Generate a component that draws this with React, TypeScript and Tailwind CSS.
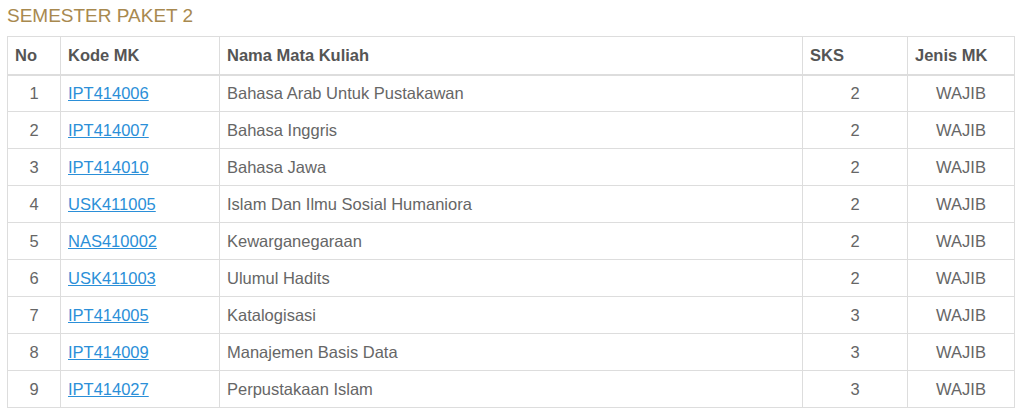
const rows = [
  ['1', 'IPT414006', 'Bahasa Arab Untuk Pustakawan', '2', 'WAJIB'],
  ['2', 'IPT414007', 'Bahasa Inggris', '2', 'WAJIB'],
  ['3', 'IPT414010', 'Bahasa Jawa', '2', 'WAJIB'],
  ['4', 'USK411005', 'Islam Dan Ilmu Sosial Humaniora', '2', 'WAJIB'],
  ['5', 'NAS410002', 'Kewarganegaraan', '2', 'WAJIB'],
  ['6', 'USK411003', 'Ulumul Hadits', '2', 'WAJIB'],
  ['7', 'IPT414005', 'Katalogisasi', '3', 'WAJIB'],
  ['8', 'IPT414009', 'Manajemen Basis Data', '3', 'WAJIB'],
  ['9', 'IPT414027', 'Perpustakaan Islam', '3', 'WAJIB'],
]

export default function App() {
  return (
    <div className="min-h-screen bg-white px-[7px] pt-[5px] font-[family-name:Liberation_Sans,Arial,sans-serif] text-[16.5px] text-[#666]">
      <h2 className="text-[19px] leading-[22px] text-[#a8894f] mb-[9px]">SEMESTER PAKET 2</h2>
      <table className="w-[1008px] border-collapse border border-[#dddddd]">
        <thead>
          <tr className="h-[38px] border-b-2 border-[#dddddd] text-left font-bold text-[#555]">
            <th className="w-[53px] border border-[#dddddd] px-[7px]">No</th>
            <th className="w-[159px] border border-[#dddddd] px-[7px]">Kode MK</th>
            <th className="w-[583px] border border-[#dddddd] px-[7px]">Nama Mata Kuliah</th>
            <th className="w-[105px] border border-[#dddddd] px-[7px]">SKS</th>
            <th className="border border-[#dddddd] px-[7px]">Jenis MK</th>
          </tr>
        </thead>
        <tbody>
          {rows.map((r) => (
            <tr key={r[0]} className="h-[37px]">
              <td className="border border-[#dddddd] px-[7px] text-center">{r[0]}</td>
              <td className="border border-[#dddddd] px-[7px]">
                <a href="#" className="text-[#2b8fd8] underline">{r[1]}</a>
              </td>
              <td className="border border-[#dddddd] px-[7px]">{r[2]}</td>
              <td className="border border-[#dddddd] px-[7px] text-center">{r[3]}</td>
              <td className="border border-[#dddddd] px-[7px] text-center">{r[4]}</td>
            </tr>
          ))}
        </tbody>
      </table>
    </div>
  )
}
